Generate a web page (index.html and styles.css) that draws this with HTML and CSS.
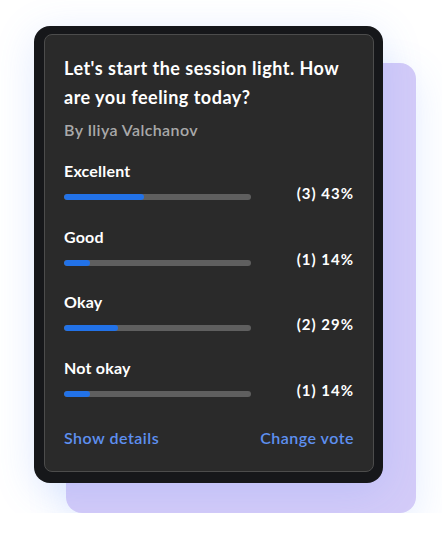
FILE: index.html
```html
<!DOCTYPE html>
<html lang="en">
<head>
    <meta charset="UTF-8">
    <meta name="viewport" content="width=device-width, initial-scale=1.0">
    <title>Poll</title>
    <link rel="stylesheet" href="styles.css">
</head>
<body>
    <div class="stage">
        <div class="backdrop"></div>
        <div class="poll-frame">
            <div class="poll">
                <h1 class="poll-title">Let's start the session light. How are you feeling today?</h1>
                <p class="poll-author">By Iliya Valchanov</p>

                <div class="option">
                    <div class="option-label">Excellent</div>
                    <div class="option-row">
                        <div class="bar"><div class="bar-fill" style="width: 43%"></div></div>
                        <span class="option-result">(3) 43%</span>
                    </div>
                </div>
                <div class="option">
                    <div class="option-label">Good</div>
                    <div class="option-row">
                        <div class="bar"><div class="bar-fill" style="width: 14%"></div></div>
                        <span class="option-result">(1) 14%</span>
                    </div>
                </div>
                <div class="option">
                    <div class="option-label">Okay</div>
                    <div class="option-row">
                        <div class="bar"><div class="bar-fill" style="width: 29%"></div></div>
                        <span class="option-result">(2) 29%</span>
                    </div>
                </div>
                <div class="option">
                    <div class="option-label">Not okay</div>
                    <div class="option-row">
                        <div class="bar"><div class="bar-fill" style="width: 14%"></div></div>
                        <span class="option-result">(1) 14%</span>
                    </div>
                </div>

                <div class="poll-actions">
                    <a href="#" class="poll-link">Show details</a>
                    <a href="#" class="poll-link">Change vote</a>
                </div>
            </div>
        </div>
    </div>
</body>
</html>
```

FILE: styles.css
```css
body {
    font-family: Lato, "Noto Sans", sans-serif;
    margin: 0;
    padding: 0;
    background-color: #ffffff;
}

.stage {
    display: grid;
    align-items: start;
    padding: 26px 0 0 34px;
}

.backdrop,
.poll-frame {
    grid-area: 1 / 1;
}

.backdrop {
    margin: 37px 0 0 32px;
    width: 350px;
    height: 450px;
    background-color: #d3cbf8;
    border-radius: 16px;
    box-shadow: 0 12px 40px rgba(90, 140, 255, 0.16);
}

.poll-frame {
    width: 349px;
    box-sizing: border-box;
    padding: 8px 9px 11px 10px;
    background-color: #16171a;
    border-radius: 16px;
    box-shadow: 0 8px 40px rgba(90, 140, 255, 0.18);
}

.poll {
    background-color: #2a2a2a;
    border: 1px solid #4c4c4c;
    border-radius: 8px;
    padding: 19px 19px 23px 19px;
    color: #ffffff;
}

.poll-title {
    margin: 0;
    font-size: 18px;
    line-height: 29px;
    font-weight: bold;
    letter-spacing: 0.5px;
}

.poll-author {
    margin: 8px 0 21px;
    font-size: 16px;
    line-height: 20px;
    font-weight: 600;
    letter-spacing: 0.4px;
    color: #a9a9a9;
}

.option {
    margin-bottom: 24.5px;
}

.option-label {
    font-size: 16px;
    line-height: 20px;
    font-weight: bold;
    letter-spacing: 0.2px;
    margin-bottom: 1px;
}

.option-row {
    display: flex;
    align-items: center;
    height: 20px;
}

.bar {
    width: 187px;
    height: 6px;
    margin-top: 10px;
    background-color: #5f5f5f;
    border-radius: 3px;
    overflow: hidden;
}

.bar-fill {
    height: 100%;
    background-color: #2272e8;
    border-radius: 3px;
}

.option-result {
    margin: 2px 0 0 auto;
    font-size: 15px;
    line-height: 20px;
    font-weight: bold;
    letter-spacing: 1px;
}

.poll-actions {
    display: flex;
    justify-content: space-between;
    margin-top: 29.5px;
}

.poll-link {
    font-size: 16px;
    line-height: 20px;
    font-weight: 600;
    letter-spacing: 0.5px;
    color: #5e90f0;
    text-decoration: none;
}
```
